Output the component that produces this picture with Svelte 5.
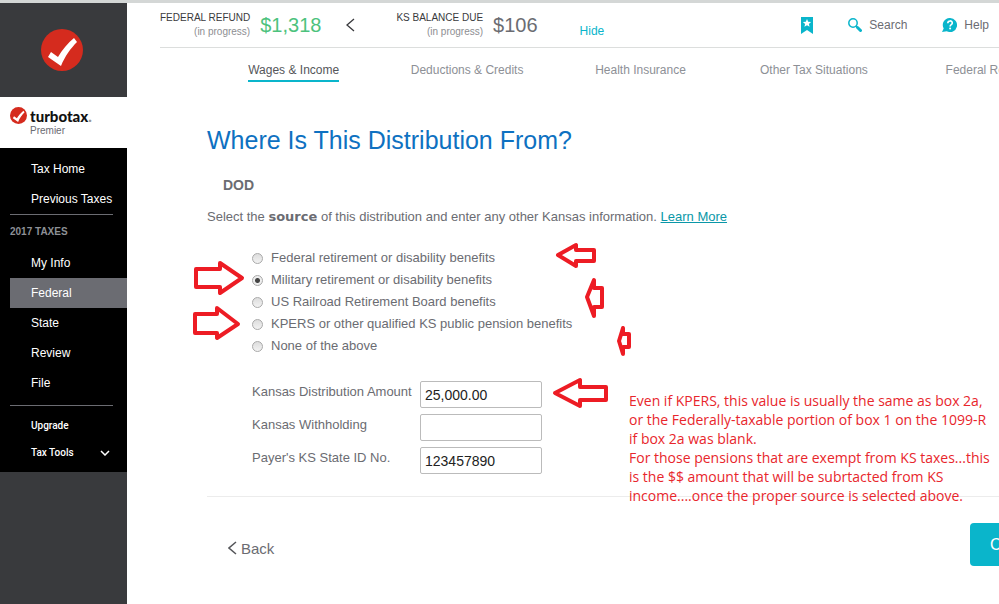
<script>
  let source = $state("military");
  let amount = $state("25,000.00");
  let withholding = $state("");
  let stateId = $state("123457890");

  const tabs = [
    "Wages & Income",
    "Deductions & Credits",
    "Health Insurance",
    "Other Tax Situations",
    "Federal Review"
  ];

  const taxLinks = ["My Info", "Federal", "State", "Review", "File"];

  const sources = [
    { id: "federal", label: "Federal retirement or disability benefits" },
    { id: "military", label: "Military retirement or disability benefits" },
    { id: "railroad", label: "US Railroad Retirement Board benefits" },
    { id: "kpers", label: "KPERS or other qualified KS public pension benefits" },
    { id: "none", label: "None of the above" }
  ];

  // hand drawn arrows on top of the form
  const arrows = [
    "7,29 31,29 31,23 53,38 31,53 31,47 7,47",
    "6,74 28,74 28,68 49,84 28,98 28,93 6,93",
    "369,15 387,5 387,10 405,10 405,21 387,21 387,26",
    "398,57 405,40 405,48 413,48 413,67 405,67 405,76",
    "430,101 434,88 434,94 440,94 440,107 434,107 434,114",
    "366,153 391,140 391,147 417,147 417,160 391,160 391,166"
  ];
</script>

{#snippet check(cls)}
  <svg class={cls} viewBox="0 0 42 42" aria-hidden="true">
    <circle cx="21" cy="21" r="21" fill="#d52b1e" />
    <path d="M7 28l3-5 7 5C21 21 27 14 33 9l3 4c-6 6-12 14-16 24z" fill="#fff" />
  </svg>
{/snippet}

<div class="app">
  <aside class="sidebar">
    <div class="badge">{@render check("badge-logo")}</div>
    <div class="brand">
      {@render check("brand-logo")}
      <div>
        <div class="brand-name">turbotax<span>.</span></div>
        <div class="brand-sub">Premier</div>
      </div>
    </div>
    <nav class="menu">
      <a href="#home">Tax Home</a>
      <a href="#previous">Previous Taxes</a>
      <hr />
      <h2>2017 TAXES</h2>
      {#each taxLinks as link}
        <a href="#{link}" class:active={link === "Federal"}>{link}</a>
      {/each}
      <hr class="lower" />
      <a class="small" href="#upgrade">Upgrade</a>
      <button class="small" type="button">
        Tax Tools
        <svg width="10" height="6" viewBox="0 0 10 6" aria-hidden="true">
          <path d="M1 1l4 4 4-4" fill="none" stroke="#fff" stroke-width="1.5" />
        </svg>
      </button>
    </nav>
  </aside>

  <main>
    <header>
      <div class="total">
        <div class="total-label">FEDERAL REFUND<small>(in progress)</small></div>
        <strong class="refund">$1,318</strong>
      </div>
      <button class="collapse" type="button" aria-label="Previous">
        <svg width="9" height="14" viewBox="0 0 9 14" aria-hidden="true">
          <path d="M8 1L1 7l7 6" fill="none" stroke="#393a3d" stroke-width="1.3" />
        </svg>
      </button>
      <div class="total">
        <div class="total-label">KS BALANCE DUE<small>(in progress)</small></div>
        <strong>$106</strong>
      </div>
      <button class="hide" type="button">Hide</button>

      <div class="tools">
        <button type="button" aria-label="Bookmark">
          <svg width="12" height="17" viewBox="0 0 12 17" aria-hidden="true">
            <path d="M0 0h12v17l-6-4-6 4z" fill="#0ab5cb" />
            <path d="M6 2l1.200 2.700 2.900.3-2.200 1.900.7 2.900L6 8.300 3.400 9.800l.7-2.900L1.900 5l2.900-.3z" fill="#fff" />
          </svg>
        </button>
        <button type="button">
          <svg width="14" height="14" viewBox="0 0 14 14" aria-hidden="true">
            <circle cx="5" cy="5" r="4.200" fill="none" stroke="#0ab5cb" stroke-width="1.500" />
            <path d="M8 8l1.500 1.500" stroke="#0ab5cb" stroke-width="1.500" />
            <path d="M9.500 9.500l3 3" stroke="#0ab5cb" stroke-width="3" stroke-linecap="round" />
          </svg>
          Search
        </button>
        <button type="button">
          <svg width="15" height="14" viewBox="0 0 15 14" aria-hidden="true">
            <path d="M8 0a7 7 0 1 1-3.200 13.200L0 14l1.700-3.600A7 7 0 0 1 8 0z" fill="#0ab5cb" />
            <path d="M5.800 5.200c0-3 4.500-3 4.500-.2 0 1.600-2.200 1.600-2.200 3.400" fill="none" stroke="#fff" stroke-width="1.600" />
            <circle cx="8.100" cy="10.500" r="1" fill="#fff" />
          </svg>
          Help
        </button>
      </div>
    </header>

    <nav class="tabs">
      {#each tabs as tab, i}
        <a href="#tab{i}" class:current={i === 0}>{tab}</a>
      {/each}
    </nav>

    <form class="content" onsubmit={(e) => e.preventDefault()}>
      <h1>Where Is This Distribution From?</h1>
      <h3>DOD</h3>
      <p class="intro">
        Select the <b>source</b> of this distribution and enter any other Kansas information.
        <a href="#learn">Learn More</a>
      </p>

      <div class="sources" role="radiogroup" aria-label="Source">
        {#each sources as s}
          <label>
            <input type="radio" name="source" value={s.id} bind:group={source} />
            {s.label}
          </label>
        {/each}
      </div>

      <div class="fields">
        <label for="amount">Kansas Distribution Amount</label>
        <input id="amount" type="text" bind:value={amount} />
        <label for="withholding">Kansas Withholding</label>
        <input id="withholding" type="text" bind:value={withholding} />
        <label for="stateId">Payer's KS State ID No.</label>
        <input id="stateId" type="text" bind:value={stateId} />
      </div>

      <div class="actions">
        <button class="back" type="button">
          <svg width="9" height="14" viewBox="0 0 9 14" aria-hidden="true">
            <path d="M8 1L1 7l7 6" fill="none" stroke="#55565a" stroke-width="1.5" />
          </svg>
          Back
        </button>
        <button class="continue" type="submit">Continue</button>
      </div>

      <svg class="arrows" width="450" height="180" viewBox="0 0 450 180" aria-hidden="true">
        {#each arrows as points}
          <polygon {points} />
        {/each}
      </svg>
      <div class="note">
        Even if KPERS, this value is usually the same as box 2a,<br />
        or the Federally-taxable portion of box 1 on the 1099-R<br />
        if box 2a was blank.<br />
        For those pensions that are exempt from KS taxes...this<br />
        is the $$ amount that will be subrtacted from KS<br />
        income....once the proper source is selected above.
      </div>
    </form>
  </main>
</div>

<style>
  :global(body) {
    font-family: "Liberation Sans", Arial, sans-serif;
    font-size: 13px;
    color: #6b6c72;
    background: #fff;
  }
  button {
    padding: 0;
    border: 0;
    background: none;
    font: inherit;
    color: inherit;
    cursor: pointer;
  }
  a {
    color: inherit;
    text-decoration: none;
  }
  .app {
    display: flex;
    box-sizing: border-box;
    min-height: 100vh;
    border-top: 3px solid #d4d7d6;
  }

  .sidebar {
    flex: none;
    width: 127px;
    background: #393a3d;
  }
  .badge {
    display: flex;
    justify-content: center;
    align-items: center;
    height: 94px;
    padding-right: 4px;
  }
  .badge-logo {
    width: 42px;
    height: 42px;
  }
  .brand {
    display: flex;
    gap: 3px;
    box-sizing: border-box;
    height: 51px;
    padding: 10px;
    background: #fff;
  }
  .brand-logo {
    width: 17px;
    height: 17px;
  }
  .brand-name {
    font: 900 15px/18px Lato, sans-serif;
    color: #111;
  }
  .brand-name span {
    color: #999;
  }
  .brand-sub {
    font-size: 10px;
    line-height: 12px;
  }
  .menu {
    display: flex;
    flex-direction: column;
    box-sizing: border-box;
    padding: 6px 0 6px 10px;
    background: #000;
    color: #fff;
    font-size: 12px;
    line-height: 30px;
  }
  .menu a,
  .menu button {
    padding-left: 21px;
  }
  .menu .active {
    background: #6b6c72;
  }
  .menu hr {
    width: 103px;
    margin: 0;
    border: 0;
    border-top: 1px solid #6b6c72;
  }
  .menu .lower {
    margin: 7px 0 6px;
  }
  .menu h2 {
    margin: 0;
    font-size: 10px;
    line-height: 33px;
    color: #8d9096;
  }
  .menu .small {
    font: 500 10px/27px Roboto, sans-serif;
  }
  .menu button {
    display: flex;
    align-items: center;
    justify-content: space-between;
    padding-right: 17px;
  }

  main {
    flex: 1;
    min-width: 0;
    overflow: hidden;
  }
  header {
    display: flex;
    align-items: center;
    height: 44px;
    margin-left: 33px;
    border-bottom: 1px solid #dcdedd;
    font-size: 12px;
  }
  .total {
    display: flex;
    align-items: center;
    gap: 10px;
  }
  .total-label {
    font-size: 10px;
    line-height: 14px;
    text-align: right;
    color: #393a3d;
  }
  .total small {
    display: block;
    font-size: 10px;
    color: #8d8e92;
  }
  .total strong {
    font-size: 20px;
    font-weight: 400;
  }
  .total .refund {
    color: #4cc27d;
  }
  .collapse {
    display: flex;
    margin: 0 41px 0 25px;
  }
  .hide {
    margin: 12px 0 0 42px;
    color: #0ab5cb;
  }
  .tools {
    display: flex;
    gap: 35px;
    margin-left: auto;
    padding-right: 10px;
  }
  .tools button {
    display: flex;
    align-items: center;
    gap: 7px;
  }

  .tabs {
    display: grid;
    grid-template-columns: repeat(5, 1fr);
    justify-items: center;
    min-width: 867px;
    margin-left: 80px;
    padding-top: 12px;
    font-size: 12px;
    line-height: 20px;
    color: #8d9096;
    white-space: nowrap;
  }
  .tabs .current {
    border-bottom: 2px solid #0ab5cb;
    color: #55565a;
  }

  .content {
    position: relative;
    min-width: 867px;
    margin-left: 80px;
  }
  h1 {
    margin: 0;
    padding-top: 41px;
    font-size: 25px;
    font-weight: 400;
    line-height: 34px;
    color: #0e71c1;
  }
  h3 {
    margin: 18px 16px 0;
    font-size: 14px;
    line-height: 20px;
  }
  .intro {
    margin: 12px 0 0;
    line-height: 20px;
  }
  .intro b {
    font-family: "DejaVu Sans", sans-serif;
  }
  .intro a {
    color: #0a97a8;
    text-decoration: underline;
  }

  .sources {
    padding: 20px 0 0 45px;
  }
  .sources label {
    display: flex;
    align-items: center;
    gap: 8px;
    width: max-content;
    line-height: 22px;
  }
  .sources input {
    appearance: none;
    width: 11px;
    height: 11px;
    margin: 0;
    border: 1px solid #a9a9a9;
    border-radius: 50%;
    background: linear-gradient(#ddd, #f2f2f2);
  }
  .sources input:checked {
    background: radial-gradient(circle, #444 0 2px, #eee 3px);
  }

  .fields {
    display: grid;
    grid-template-columns: 168px 122px;
    gap: 6px 0;
    padding: 24px 0 22px 45px;
    border-bottom: 1px solid #ececec;
  }
  .fields label {
    line-height: 22px;
  }
  .fields input {
    box-sizing: border-box;
    height: 27px;
    padding: 0 4px;
    border: 1px solid #bbb;
    border-radius: 2px;
    font: 14px "Liberation Sans", Arial, sans-serif;
    color: #222;
  }

  .actions {
    display: flex;
    justify-content: space-between;
    align-items: flex-start;
    padding: 26px 0 38px 21px;
  }
  .back {
    display: flex;
    align-items: center;
    gap: 4px;
    height: 50px;
    font-size: 15px;
  }
  .continue {
    height: 43px;
    padding: 0 20px;
    border-radius: 4px;
    background: #0ab5cb;
    font-size: 16px;
    color: #fff;
  }

  .arrows {
    position: absolute;
    left: -18px;
    top: 158px;
    pointer-events: none;
  }
  .arrows polygon {
    fill: #fff;
    stroke: #ed1c24;
    stroke-width: 4;
    stroke-linejoin: round;
  }
  .note {
    position: absolute;
    left: 422px;
    top: 309px;
    font: 14px/19px "Open Sans", sans-serif;
    color: #e8262c;
    white-space: nowrap;
  }
</style>
